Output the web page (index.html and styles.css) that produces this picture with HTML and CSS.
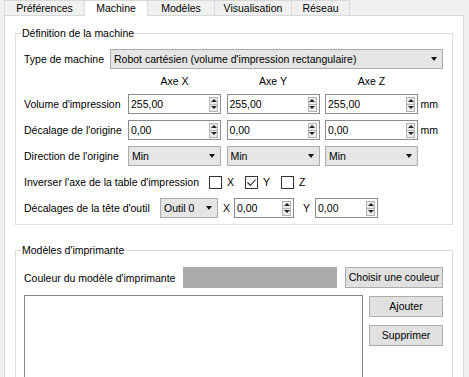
FILE: index.html
```html
<!DOCTYPE html>
<html lang="fr">
<head>
    <meta charset="UTF-8">
    <title>Préférences - Machine</title>
    <link rel="stylesheet" href="styles.css">
</head>
<body>
    <!-- Tab bar -->
    <div class="tabbar">
        <div class="tab tab-first">Préférences</div>
        <div class="tab active">Machine</div>
        <div class="tab tab-models">Modèles</div>
        <div class="tab tab-visu">Visualisation</div>
        <div class="tab tab-net">Réseau</div>
    </div>

    <div class="pane">
        <!-- Machine definition -->
        <fieldset class="group">
            <legend>Définition de la machine</legend>
            <div class="machine-grid">
                <div class="row-full">
                    <span class="label label-type">Type de machine</span>
                    <div class="combo combo-wide"><span class="combo-text">Robot cartésien (volume d'impression rectangulaire)</span><span class="arrow"></span></div>
                </div>

                <span></span>
                <span class="axis">Axe X</span>
                <span class="axis">Axe Y</span>
                <span class="axis">Axe Z</span>
                <span></span>

                <span class="label">Volume d'impression</span>
                <div class="spin"><span class="value">255,00</span><span class="spin-btns"><span class="up"></span><span class="down"></span></span></div>
                <div class="spin"><span class="value">255,00</span><span class="spin-btns"><span class="up"></span><span class="down"></span></span></div>
                <div class="spin"><span class="value">255,00</span><span class="spin-btns"><span class="up"></span><span class="down"></span></span></div>
                <span class="unit">mm</span>

                <span class="label">Décalage de l'origine</span>
                <div class="spin"><span class="value">0,00</span><span class="spin-btns"><span class="up"></span><span class="down"></span></span></div>
                <div class="spin"><span class="value">0,00</span><span class="spin-btns"><span class="up"></span><span class="down"></span></span></div>
                <div class="spin"><span class="value">0,00</span><span class="spin-btns"><span class="up"></span><span class="down"></span></span></div>
                <span class="unit">mm</span>

                <span class="label">Direction de l'origine</span>
                <div class="combo"><span class="combo-text">Min</span><span class="arrow"></span></div>
                <div class="combo"><span class="combo-text">Min</span><span class="arrow"></span></div>
                <div class="combo"><span class="combo-text">Min</span><span class="arrow"></span></div>
                <span></span>

                <div class="row-full">
                    <span class="label label-invert">Inverser l'axe de la table d'impression</span>
                    <span class="check-item"><span class="checkbox"></span>X</span>
                    <span class="check-item"><span class="checkbox checked"><svg width="11" height="11" viewBox="0 0 11 11"><polyline points="1.5,5.5 4.5,8.5 9.5,2.5" fill="none" stroke="#222" stroke-width="1.1"/></svg></span>Y</span>
                    <span class="check-item"><span class="checkbox"></span>Z</span>
                </div>

                <div class="row-full">
                    <span class="label label-tool">Décalages de la tête d'outil</span>
                    <div class="combo combo-tool"><span class="combo-text">Outil 0</span><span class="arrow"></span></div>
                    <span class="coord">X</span>
                    <div class="spin spin-tool-x"><span class="value">0,00</span><span class="spin-btns"><span class="up"></span><span class="down"></span></span></div>
                    <span class="coord coord-y">Y</span>
                    <div class="spin spin-tool-y"><span class="value">0,00</span><span class="spin-btns"><span class="up"></span><span class="down"></span></span></div>
                </div>
            </div>
        </fieldset>

        <!-- Printer models -->
        <fieldset class="group group-models">
            <legend>Modèles d'imprimante</legend>
            <div class="color-row">
                <span class="label label-color">Couleur du modèle d'imprimante</span>
                <div class="color-swatch"></div>
                <div class="btn btn-color">Choisir une couleur</div>
            </div>
            <div class="list-row">
                <div class="list"></div>
                <div class="list-buttons">
                    <div class="btn">Ajouter</div>
                    <div class="btn">Supprimer</div>
                </div>
            </div>
        </fieldset>
    </div>
</body>
</html>
```

FILE: styles.css
```css
/* General styles */
* {
    box-sizing: border-box;
}

body {
    margin: 0;
    height: 377px;
    overflow: hidden;
    background-color: #f0f0f0;
    color: #000;
    font-family: "Liberation Sans", Arial, sans-serif;
    font-size: 10.5px;
}

/* Tabs */
.tabbar {
    display: flex;
    align-items: flex-start;
    margin-left: 4px;
    height: 15px;
}

.tab {
    height: 15px;
    line-height: 14px;
    text-align: center;
    background-color: #f0f0f0;
    border-top: 1px solid #d9d9d9;
    border-right: 1px solid #d9d9d9;
}

.tab-first {
    width: 81px;
    border-left: 1px solid #d9d9d9;
}

.tab.active {
    width: 63px;
    height: 16px;
    background-color: #fff;
    position: relative;
    z-index: 1;
}

.tab-models {
    width: 67px;
}

.tab-visu {
    width: 77px;
}

.tab-net {
    width: 58px;
}

/* Tab pane */
.pane {
    margin-left: 4px;
    width: 460px;
    height: 362px;
    overflow: hidden;
    background-color: #fff;
    border: 1px solid #d9d9d9;
    border-bottom: none;
    padding: 11px 10px 0 10px;
}

/* Group boxes */
.group {
    margin: 0;
    min-width: 0;
    padding: 9px 9px 6px 8px;
    border: 1px solid #dcdcdc;
}

.group legend {
    margin-left: -3px;
    padding: 0 1px;
    line-height: 13px;
}

.group-models {
    margin-top: 19px;
    padding-top: 10px;
}

/* Machine grid */
.machine-grid {
    display: grid;
    grid-template-columns: 98.5px 93px 93px 93px 1fr;
    grid-template-rows: 20px 13px 20px 20px 20px 20px 20px;
    column-gap: 5.5px;
    row-gap: 6px;
    align-items: center;
}

.row-full {
    grid-column: 1 / -1;
    display: flex;
    align-items: center;
    height: 20px;
}

.label {
    white-space: nowrap;
}

.label-type {
    width: 86px;
    flex: none;
}

.label-invert {
    width: 185px;
    flex: none;
}

.label-tool {
    width: 136px;
    flex: none;
}

.axis {
    text-align: center;
    line-height: 13px;
}

.unit {
    margin-left: -3px;
}

/* Spin boxes */
.spin {
    display: flex;
    align-items: center;
    height: 20px;
    padding-left: 2px;
    background-color: #fff;
    border: 1px solid #8c8c8c;
}

.spin .value {
    flex: 1;
}

.spin-btns {
    display: flex;
    flex-direction: column;
    width: 9px;
    height: 15px;
    margin-right: 2px;
    background-color: #ececec;
    border: 1px solid #b4b4b4;
}

.spin-btns span {
    flex: 1;
    display: flex;
    align-items: center;
    justify-content: center;
}

.spin-btns .up {
    border-bottom: 1px solid #b4b4b4;
}

.spin-btns .up::before {
    content: "";
    border-left: 3px solid transparent;
    border-right: 3px solid transparent;
    border-bottom: 3px solid #222;
}

.spin-btns .down::before {
    content: "";
    border-left: 3px solid transparent;
    border-right: 3px solid transparent;
    border-top: 3px solid #222;
}

.spin-tool-x {
    width: 60px;
    margin-left: 4px;
}

.spin-tool-y {
    width: 63px;
    margin-left: 5px;
}

/* Combo boxes */
.combo {
    display: flex;
    align-items: center;
    height: 20px;
    padding-left: 3px;
    background-color: #e5e5e5;
    border: 1px solid #acacac;
}

.combo-text {
    flex: 1;
    white-space: nowrap;
    overflow: hidden;
}

.combo-wide {
    flex: 1;
}

.arrow {
    width: 0;
    height: 0;
    margin-right: 5px;
    border-left: 3.5px solid transparent;
    border-right: 3.5px solid transparent;
    border-top: 4px solid #111;
}

.combo-tool {
    width: 58px;
}

.coord {
    margin-left: 5px;
}

.coord-y {
    margin-left: 9px;
}

/* Checkboxes */
.check-item {
    display: flex;
    align-items: center;
    width: 36px;
    gap: 5px;
}

.checkbox {
    display: flex;
    align-items: center;
    justify-content: center;
    width: 13px;
    height: 13px;
    background-color: #fff;
    border: 1px solid #333;
}

/* Printer models */
.color-row {
    display: flex;
    align-items: center;
    height: 21px;
}

.label-color {
    width: 159px;
    flex: none;
}

.color-swatch {
    width: 154px;
    height: 21px;
    background-color: #ababab;
}

.btn {
    height: 21px;
    line-height: 19px;
    text-align: center;
    white-space: nowrap;
    background-color: #e1e1e1;
    border: 1px solid #adadad;
}

.btn-color {
    width: 98px;
    margin-left: 8px;
}

.list-row {
    display: flex;
    gap: 6px;
    margin-top: 7px;
}

.list {
    flex: 1;
    height: 100px;
    background-color: #fff;
    border: 1px solid #828790;
}

.list-buttons {
    width: 74px;
    display: flex;
    flex-direction: column;
    gap: 8px;
    padding-top: 1px;
}
```
